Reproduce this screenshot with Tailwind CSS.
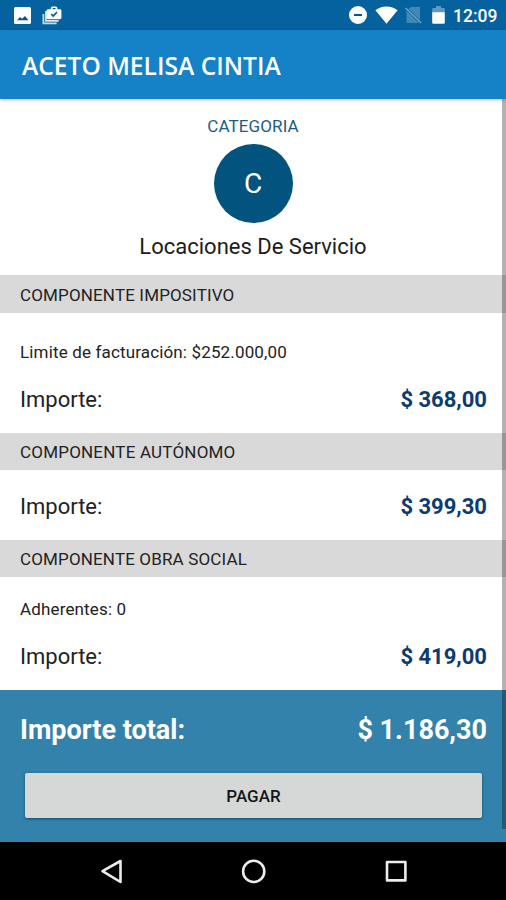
<!DOCTYPE html>
<html lang="es">
<head>
  <meta charset="UTF-8" />
  <meta name="viewport" content="width=device-width, initial-scale=1.0" />
  <title>Detalle de pago</title>
  <script src="https://cdn.jsdelivr.net/npm/@tailwindcss/browser@4"></script>
</head>
<body class="bg-white font-[Roboto,sans-serif] text-[#222]">
  <div class="flex flex-col w-[506px] h-[900px] overflow-hidden">
    <!-- Status bar -->
    <div class="flex items-center justify-between h-[30px] shrink-0 bg-[#06629f] pl-[14px] pr-[9px] text-white">
      <div class="flex items-center gap-[11px]">
        <svg class="w-[17px] h-[17px] mt-px" viewBox="0 0 17 17">
          <rect width="17" height="17" rx="1.6" fill="#fff" />
          <path d="M3 13.2 6 10l2.100 1.800L11 9l3.500 4.200z" fill="#06529c" />
        </svg>
        <svg class="w-[20px] h-[19px] mt-px" viewBox="0 0 20 19" fill="none">
          <path d="M1.400 8v9.300h13.200" stroke="#c5dcea" stroke-width="1.800" />
          <path d="M4 5v9.800h12.600" stroke="#d9e8f1" stroke-width="1.800" />
          <path d="M6 3.200h2.800V2q0-1.600 1.600-1.600h3.400q1.600 0 1.600 1.600v1.200H18q1.400 0 1.400 1.400v7.200q0 1.400-1.400 1.400H6q-1.400 0-1.400-1.400V4.600Q4.600 3.200 6 3.200z" fill="#fff" />
          <path d="M10.600 2h3v1.200h-3z" fill="#06629f" />
          <path d="m9.200 8.100 2 2 3.800-4" stroke="#06629f" stroke-width="1.600" />
        </svg>
      </div>
      <div class="flex items-center">
        <svg class="w-[18px] h-[18px]" viewBox="0 0 18 18">
          <circle cx="9" cy="9" r="9" fill="#fff" />
          <path d="M5 9h8" stroke="#06529c" stroke-width="2" />
        </svg>
        <svg class="w-[23px] h-[18px] ml-[8px]" viewBox="0 0 23 18">
          <path d="M11.500 17.800 .4 4.200Q5 .4 11.500.4t11.100 3.800z" fill="#fff" />
        </svg>
        <svg class="w-[17px] h-[18px] ml-[7px]" viewBox="0 0 17 18">
          <path d="M6 1h9v13L3.500 2.800zM1.500 4.500 14 17H1.500z" fill="#4189b5" />
          <path d="m.6 2 15.500 15" stroke="#6fa6c7" stroke-width="1.400" />
        </svg>
        <svg class="w-[13px] h-[18px] ml-[10px]" viewBox="0 0 13 18">
          <path d="M4 0h5v2h2.600q1.200 0 1.200 1.200V7H.2V3.200Q.2 2 1.400 2H4z" fill="#5c9ac0" />
          <path d="M.2 6.200h12.600v10.400q0 1.200-1.200 1.200H1.400q-1.200 0-1.200-1.200z" fill="#fff" />
        </svg>
        <span class="ml-[8px] w-[44px] whitespace-nowrap text-[17.500px] leading-[30px] font-medium pt-[2px]">12:09</span>
      </div>
    </div>

    <!-- App bar -->
    <header class="relative z-10 flex items-center h-[69px] shrink-0 bg-[#1581c6] pl-[22px] shadow-[0_1px_4px_rgba(0,0,0,0.25)]">
      <h1 class="font-['Open_Sans',sans-serif] font-semibold text-[24.600px] leading-[32px] pt-[2px] text-white whitespace-nowrap">ACETO MELISA CINTIA</h1>
    </header>

    <!-- Content -->
    <main class="relative flex-1 flex flex-col">
      <section class="flex flex-col items-center h-[176px]">
        <p class="mt-[17px] text-[17px] leading-5 tracking-[0.1px] text-[#1d5a86]">CATEGORIA</p>
        <div class="flex items-center justify-center size-[79px] mt-[8px] rounded-full bg-[#02547f] text-[28px] text-white">C</div>
        <p class="mt-[10px] text-[22px] leading-7 text-[#1c1c1c]">Locaciones De Servicio</p>
      </section>

      <h2 class="flex items-center h-[38px] bg-[#d9d9d9] px-5 pt-[3px] text-[17px] tracking-[0.150px]">COMPONENTE IMPOSITIVO</h2>
      <section class="h-[120px] pl-5 pr-[19px] pt-[29px]">
        <p class="text-[17px] leading-5 tracking-[0.150px]">Limite de facturación: $252.000,00</p>
        <div class="flex justify-between mt-[24px] text-[22px] leading-7">
          <span>Importe:</span>
          <span class="font-bold text-[#0c3b70]">$ 368,00</span>
        </div>
      </section>

      <h2 class="flex items-center h-[37px] bg-[#d9d9d9] px-5 pt-[2px] text-[17px] tracking-[0.200px]">COMPONENTE AUTÓNOMO</h2>
      <section class="h-[70px] pl-5 pr-[19px] pt-[23px]">
        <div class="flex justify-between text-[22px] leading-7">
          <span>Importe:</span>
          <span class="font-bold text-[#0c3b70]">$ 399,30</span>
        </div>
      </section>

      <h2 class="flex items-center h-[37px] bg-[#d9d9d9] px-5 pt-[2px] text-[17px] tracking-[0.150px]">COMPONENTE OBRA SOCIAL</h2>
      <section class="h-[113px] pl-5 pr-[19px] pt-[22px]">
        <p class="text-[17px] leading-5 tracking-[0.150px]">Adherentes: 0</p>
        <div class="flex justify-between mt-[24px] text-[22px] leading-7">
          <span>Importe:</span>
          <span class="font-bold text-[#0c3b70]">$ 419,00</span>
        </div>
      </section>

      <!-- Total -->
      <section class="h-[152px] bg-[#3382ab] pl-5 pr-[19px] pt-[23px] text-white">
        <div class="flex justify-between text-[27px] leading-[34px] font-bold">
          <span>Importe total:</span>
          <span>$ 1.186,30</span>
        </div>
        <button class="block w-[457px] h-[45px] mt-[26px] ml-[5px] pt-[2px] rounded-[2px] bg-[#d6d8d7] text-[17px] font-medium text-[#151515] shadow-[0_1px_3px_rgba(0,60,90,0.8)]">PAGAR</button>
      </section>

      <!-- Scrollbar -->
      <div class="absolute top-0 right-0 w-[4px] h-[730px] bg-black/30"></div>
    </main>

    <!-- Navigation bar -->
    <nav class="flex items-center h-[58px] shrink-0 bg-black">
      <svg class="w-[506px] h-[58px]" viewBox="0 0 506 58" fill="none" stroke="#ececec" stroke-width="2.600" stroke-linejoin="round">
        <path d="M102.500 29.200 120.500 19v21z" />
        <circle cx="253.700" cy="29.400" r="10.600" />
        <rect x="387" y="20" width="18.400" height="18.400" />
      </svg>
    </nav>
  </div>
</body>
</html>
